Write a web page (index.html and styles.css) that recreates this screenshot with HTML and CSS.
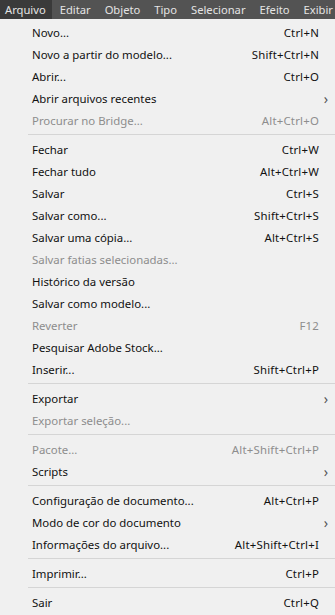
FILE: index.html
```html
<!DOCTYPE html>
<html>
<head>
<meta charset="utf-8">
<title>Arquivo</title>
<link rel="stylesheet" href="styles.css">
</head>
<body>
<div class="menubar">
	<span class="top active">Arquivo</span><span class="top">Editar</span><span class="top">Objeto</span><span class="top">Tipo</span><span class="top">Selecionar</span><span class="top">Efeito</span><span class="top">Exibir</span>
</div>

<div class="menu">
	<div class="item"><span>Novo...</span><span class="key">Ctrl+N</span></div>
	<div class="item"><span>Novo a partir do modelo...</span><span class="key">Shift+Ctrl+N</span></div>
	<div class="item"><span>Abrir...</span><span class="key">Ctrl+O</span></div>
	<div class="item sub"><span>Abrir arquivos recentes</span></div>
	<div class="item off"><span>Procurar no Bridge...</span><span class="key">Alt+Ctrl+O</span></div>
	<div class="sep"></div>
	<div class="item"><span>Fechar</span><span class="key">Ctrl+W</span></div>
	<div class="item"><span>Fechar tudo</span><span class="key">Alt+Ctrl+W</span></div>
	<div class="item"><span>Salvar</span><span class="key">Ctrl+S</span></div>
	<div class="item"><span>Salvar como...</span><span class="key">Shift+Ctrl+S</span></div>
	<div class="item"><span>Salvar uma cópia...</span><span class="key">Alt+Ctrl+S</span></div>
	<div class="item off"><span>Salvar fatias selecionadas...</span></div>
	<div class="item"><span>Histórico da versão</span></div>
	<div class="item"><span>Salvar como modelo...</span></div>
	<div class="item off"><span>Reverter</span><span class="key">F12</span></div>
	<div class="item"><span>Pesquisar Adobe Stock...</span></div>
	<div class="item"><span>Inserir...</span><span class="key">Shift+Ctrl+P</span></div>
	<div class="sep"></div>
	<div class="item sub"><span>Exportar</span></div>
	<div class="item off"><span>Exportar seleção...</span></div>
	<div class="sep"></div>
	<div class="item off"><span>Pacote...</span><span class="key">Alt+Shift+Ctrl+P</span></div>
	<div class="item sub"><span>Scripts</span></div>
	<div class="sep"></div>
	<div class="item"><span>Configuração de documento...</span><span class="key">Alt+Ctrl+P</span></div>
	<div class="item sub"><span>Modo de cor do documento</span></div>
	<div class="item"><span>Informações do arquivo...</span><span class="key">Alt+Shift+Ctrl+I</span></div>
	<div class="sep"></div>
	<div class="item"><span>Imprimir...</span><span class="key">Ctrl+P</span></div>
	<div class="sep"></div>
	<div class="item"><span>Sair</span><span class="key">Ctrl+Q</span></div>
</div>
</body>
</html>
```

FILE: styles.css
```css
body {margin: 0; background: #f0f0f0; font: 11.4px "Noto Sans", "Open Sans", sans-serif; color: #111; overflow: hidden;}
.menubar {display: flex; height: 19px; background: #535353; white-space: nowrap; overflow: hidden;}
.top {display: flex; align-items: center; padding: 0 6px 0 8px; color: #e4e4e4; font-size: 11.2px;}
.top.active {padding: 0 6px 0 5px; background: #3a3a3a;}
.menu {padding-top: 2px;}
.item {display: flex; align-items: center; justify-content: space-between; height: 22px; padding: 0 16px 0 32px; position: relative;}
.key {letter-spacing: 0.2px;}
.item.off {color: #8d8d8d;}
.item.sub::after {content: "›"; position: absolute; right: 7px; top: 2px; font-size: 14px; color: #555;}
.sep {height: 1px; background: #d5d5d5; margin: 3px 0 3px 28px;}
```
